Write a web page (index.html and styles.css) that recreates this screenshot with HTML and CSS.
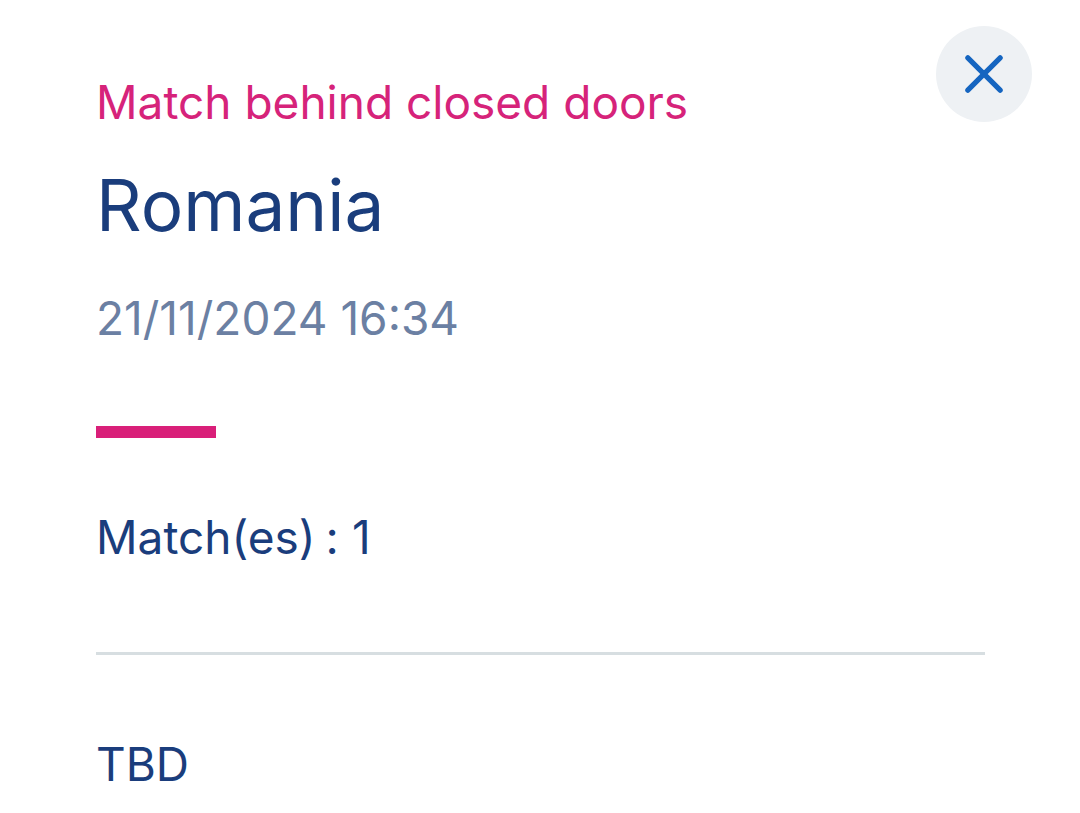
FILE: index.html
```html
<!DOCTYPE html>
<html lang="en">
<head>
<meta charset="UTF-8" />
<title>Match details</title>
<link rel="stylesheet" href="styles.css">
</head>
<body>
  <div class="sheet">
    <button class="close" aria-label="Close">
      <svg width="40" height="40" viewBox="0 0 40 40">
        <path d="M3 3 L37 37 M37 3 L3 37" stroke="#1565c0" stroke-width="5.5" stroke-linecap="round" fill="none"/>
      </svg>
    </button>
    <div class="label">Match behind closed doors</div>
    <div class="country">Romania</div>
    <div class="date">21/11/2024 16:34</div>
    <div class="accent"></div>
    <div class="count">Match(es)<span class="colon">:</span>1</div>
    <div class="divider"></div>
    <div class="team">TBD</div>
  </div>
</body>
</html>
```

FILE: styles.css
```css
body {
  margin: 0;
  background: #fff;
  font-family: Inter, "Open Sans", sans-serif;
}
.sheet {
  position: relative;
  display: flex;
  flex-direction: column;
  padding: 74px 95px 0 96px;
  min-height: 813px;
  box-sizing: border-box;
}

/* Close button */
.close {
  position: absolute;
  top: 26px;
  right: 48px;
  width: 96px;
  height: 96px;
  border: none;
  border-radius: 50%;
  background: #eef1f4;
  display: flex;
  align-items: center;
  justify-content: center;
  padding: 0;
}
.close svg { width: 38px; height: 38px; }

.label {
  color: #d6237a;
  font-size: 46px;
  line-height: 56px;
}
.country {
  margin-top: 30px;
  color: #1a3d7c;
  font-size: 71px;
  line-height: 90px;
}
.date {
  margin-top: 40px;
  color: #6b80a3;
  font-size: 46px;
  line-height: 56px;
}
.accent {
  margin-top: 80px;
  width: 120px;
  height: 12px;
  background: #d91f79;
}
.count {
  margin-top: 71px;
  color: #1a3d7c;
  font-size: 46px;
  line-height: 56px;
}
.count .colon {
  margin: 0 13px 0 10px;
}
.divider {
  margin-top: 87px;
  height: 3px;
  background: #d7dee1;
}
.team {
  margin-top: 81px;
  color: #1a3d7c;
  font-size: 46px;
  line-height: 56px;
}
```
